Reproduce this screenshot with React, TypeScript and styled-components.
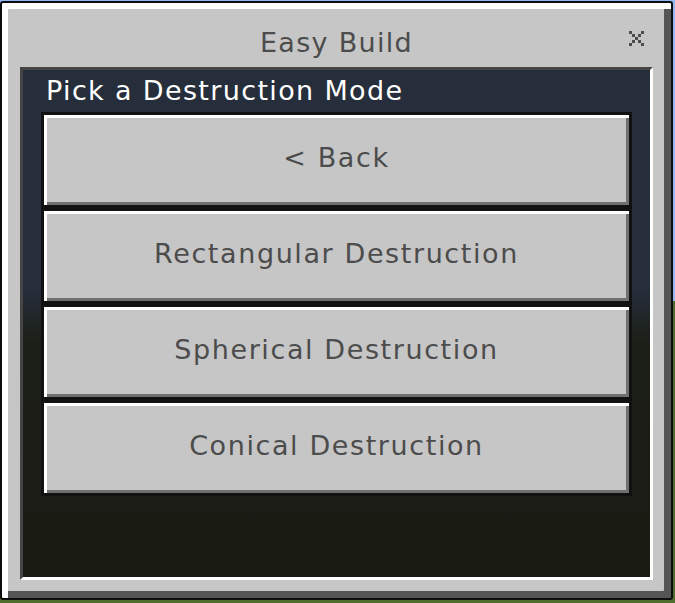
import styled, { createGlobalStyle } from 'styled-components'

const GlobalStyle = createGlobalStyle`
  html, body {
    margin: 0;
    padding: 0;
  }
  body {
    width: 675px;
    height: 603px;
    overflow: hidden;
    background: linear-gradient(#93b6f5 0%, #93b6f5 50%, #4f6e2e 50%, #4f6e2e 100%);
    font-family: "DejaVu Sans", "Liberation Sans", sans-serif;
  }
`

const Window = styled.div`
  box-sizing: border-box;
  width: 673px;
  height: 599px;
  margin-top: 1px;
  border: 2px solid #0d0d0d;
  border-radius: 3px;
  background: #c6c6c6;
  box-shadow: inset 6px 6px 0 #ffffff, inset -7px -7px 0 #555555;
  display: flex;
  flex-direction: column;
  padding: 0 18px 18px 18px;
`

const TitleBar = styled.div`
  box-sizing: border-box;
  height: 64px;
  display: grid;
  grid-template-columns: 1fr auto 1fr;
  align-items: start;
`

const Title = styled.h1`
  grid-column: 2;
  margin: 25px 0 0 0;
  font-size: 27px;
  font-weight: normal;
  line-height: 30px;
  letter-spacing: 1.3px;
  color: #4c4c4c;
`

const CloseButton = styled.button`
  grid-column: 3;
  justify-self: end;
  margin: 28px 9px 0 0;
  padding: 0;
  border: none;
  background: none;
  width: 15px;
  height: 15px;
  display: block;
  cursor: pointer;
  svg {
    display: block;
  }
`

const Panel = styled.div`
  flex: 1;
  display: flex;
  flex-direction: column;
  border-style: solid;
  border-width: 3px;
  border-color: #454545 #ffffff #ffffff #454545;
  background: linear-gradient(
    to bottom,
    #262e3b 0%,
    #262e3b 43%,
    #1c1f17 54%,
    #1a1c14 100%
  );
`

const Subtitle = styled.div`
  padding: 6px 0 6px 23px;
  font-size: 27px;
  line-height: 30px;
  letter-spacing: 1.35px;
  color: #ffffff;
`

const ButtonList = styled.div`
  display: flex;
  flex-direction: column;
  margin: 0 18px;
`

const FormButton = styled.button`
  box-sizing: border-box;
  height: 96px;
  width: 100%;
  border: 3px solid #111111;
  background: #c6c6c6;
  box-shadow: inset 3px 3px 0 #ffffff, inset -3px -3px 0 #6f6f6f;
  font-family: "DejaVu Sans", "Liberation Sans", sans-serif;
  font-size: 27px;
  line-height: 30px;
  letter-spacing: 1.6px;
  color: #4c4c4c;
  padding: 0 0 4px 0;
  cursor: pointer;
`

const CloseIcon = () => (
  <svg width="15" height="15" viewBox="0 0 5 5" shapeRendering="crispEdges">
    <g fill="#4c4c4c">
      <rect x="0" y="0" width="1" height="1" />
      <rect x="4" y="0" width="1" height="1" />
      <rect x="1" y="1" width="1" height="1" />
      <rect x="3" y="1" width="1" height="1" />
      <rect x="2" y="2" width="1" height="1" />
      <rect x="1" y="3" width="1" height="1" />
      <rect x="3" y="3" width="1" height="1" />
      <rect x="0" y="4" width="1" height="1" />
      <rect x="4" y="4" width="1" height="1" />
    </g>
  </svg>
)

const buttons = [
  '< Back',
  'Rectangular Destruction',
  'Spherical Destruction',
  'Conical Destruction',
]

export default function App() {
  return (
    <>
      <GlobalStyle />
      <Window>
        <TitleBar>
          <Title>Easy Build</Title>
          <CloseButton aria-label="Close">
            <CloseIcon />
          </CloseButton>
        </TitleBar>
        <Panel>
          <Subtitle>Pick a Destruction Mode</Subtitle>
          <ButtonList>
            {buttons.map((b) => (
              <FormButton key={b}>{b}</FormButton>
            ))}
          </ButtonList>
        </Panel>
      </Window>
    </>
  )
}
